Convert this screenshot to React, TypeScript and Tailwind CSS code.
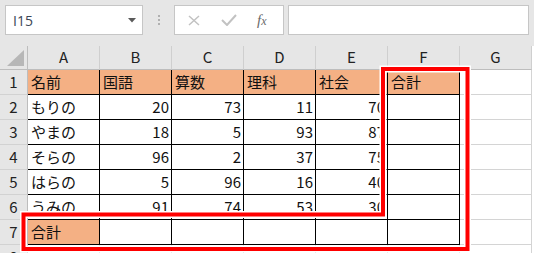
const COLS = ["A", "B", "C", "D", "E", "F", "G"];

type Cell = { v?: string; num?: boolean; fill?: boolean };

const ROWS: Cell[][] = [
  [
    { v: "名前", fill: true },
    { v: "国語", fill: true },
    { v: "算数", fill: true },
    { v: "理科", fill: true },
    { v: "社会", fill: true },
    { v: "合計", fill: true },
  ],
  ...[
    ["もりの", "20", "73", "11", "70"],
    ["やまの", "18", "5", "93", "87"],
    ["そらの", "96", "2", "37", "75"],
    ["はらの", "5", "96", "16", "40"],
    ["うみの", "91", "74", "53", "30"],
  ].map((r) => [{ v: r[0] }, ...r.slice(1).map((v) => ({ v, num: true })), {}]),
  [{ v: "合計", fill: true }, {}, {}, {}, {}, {}],
];

function Toolbar() {
  return (
    <div className="flex h-[46px] items-start bg-[#e6e6e6] pl-[5px] pt-[5px]">
      <div className="flex h-[30px] w-[138px] items-center justify-between border border-[#c6c6c6] bg-white pl-[7px] pr-[6px]">
        <span className="font-['Open_Sans',sans-serif] text-[14px] text-[#3b4656]">I15</span>
        <svg width="8" height="5" viewBox="0 0 8 5" aria-hidden>
          <path d="M0 0h8L4 4.5z" fill="#5a5a5a" />
        </svg>
      </div>
      <div className="flex h-[30px] w-[31px] flex-col items-center justify-center gap-[2px]">
        <span className="h-[2px] w-[2px] bg-[#b0b0b0]" />
        <span className="h-[2px] w-[2px] bg-[#b0b0b0]" />
        <span className="h-[2px] w-[2px] bg-[#b0b0b0]" />
      </div>
      <div className="flex h-[30px] w-[110px] items-center border border-[#c6c6c6] bg-white">
        <svg className="ml-[13px]" width="12" height="11" viewBox="0 0 12 11" aria-hidden>
          <path d="M1 1l10 9M11 1L1 10" stroke="#c2c2c2" strokeWidth="1.5" />
        </svg>
        <svg className="ml-[21px]" width="16" height="12" viewBox="0 0 16 12" aria-hidden>
          <path d="M1 6l5 5L15 1" stroke="#c2c2c2" strokeWidth="2" fill="none" />
        </svg>
        <span className="ml-[20px] font-['Liberation_Serif',serif] text-[15px] italic text-[#6a6a6a]">
          f<span className="text-[12px]">x</span>
        </span>
      </div>
      <div className="ml-[4px] h-[30px] w-[241px] border border-[#c6c6c6] bg-white" />
    </div>
  );
}

function Sheet() {
  return (
    <div className="grid grid-cols-[28px_repeat(7,72px)] font-['Noto_Sans_CJK_JP',sans-serif] text-[15px] text-[#111]">
      <div className="relative h-[24px] border-b border-r border-[#bdbdbd] bg-[#e6e6e6]">
        <svg className="absolute bottom-[3px] right-[3px]" width="17" height="16" viewBox="0 0 17 16" aria-hidden>
          <path d="M17 0v16H0z" fill="#b7b7b7" />
        </svg>
      </div>
      {COLS.map((c) => (
        <div
          key={c}
          className="flex h-[24px] items-center justify-center border-b border-r border-b-[#bdbdbd] border-r-[#cfcfcf] bg-[#e6e6e6] text-[15px] text-[#222]"
        >
          {c}
        </div>
      ))}
      {[...ROWS, []].map((row, ri) => (
        <div key={ri} className="contents">
          <div className="flex h-[25px] items-center justify-center border-b border-r border-b-[#d2d2d2] border-r-[#bdbdbd] bg-[#e6e6e6] text-[15px] text-[#222]">
            {ri + 1}
          </div>
          {COLS.map((c, ci) => {
            const cell = row[ci];
            const inTable = ri < 7 && ci < 6;
            return (
              <div
                key={c}
                className={
                  "flex h-[25px] items-center border-b border-r " +
                  (inTable ? "border-black " : "border-[#d4d4d4] ") +
                  (cell?.fill ? "bg-[#f4b084] " : "bg-white ") +
                  (cell?.num ? "justify-end pr-[2px]" : "pl-[3px]")
                }
              >
                {cell?.v}
              </div>
            );
          })}
        </div>
      ))}
    </div>
  );
}

export default function App() {
  return (
    <div className="relative h-[253px] w-[534px] overflow-hidden bg-white">
      <Toolbar />
      <Sheet />
      <svg className="pointer-events-none absolute inset-0" width="534" height="253" aria-hidden>
        <path
          d="M383 69H467.5V249H23.5V214.5H383Z"
          fill="none"
          stroke="#ffffff"
          strokeWidth="7"
        />
        <path
          d="M383 69H467.5V249H23.5V214.5H383Z"
          fill="none"
          stroke="#ff0000"
          strokeWidth="4"
        />
      </svg>
    </div>
  );
}
